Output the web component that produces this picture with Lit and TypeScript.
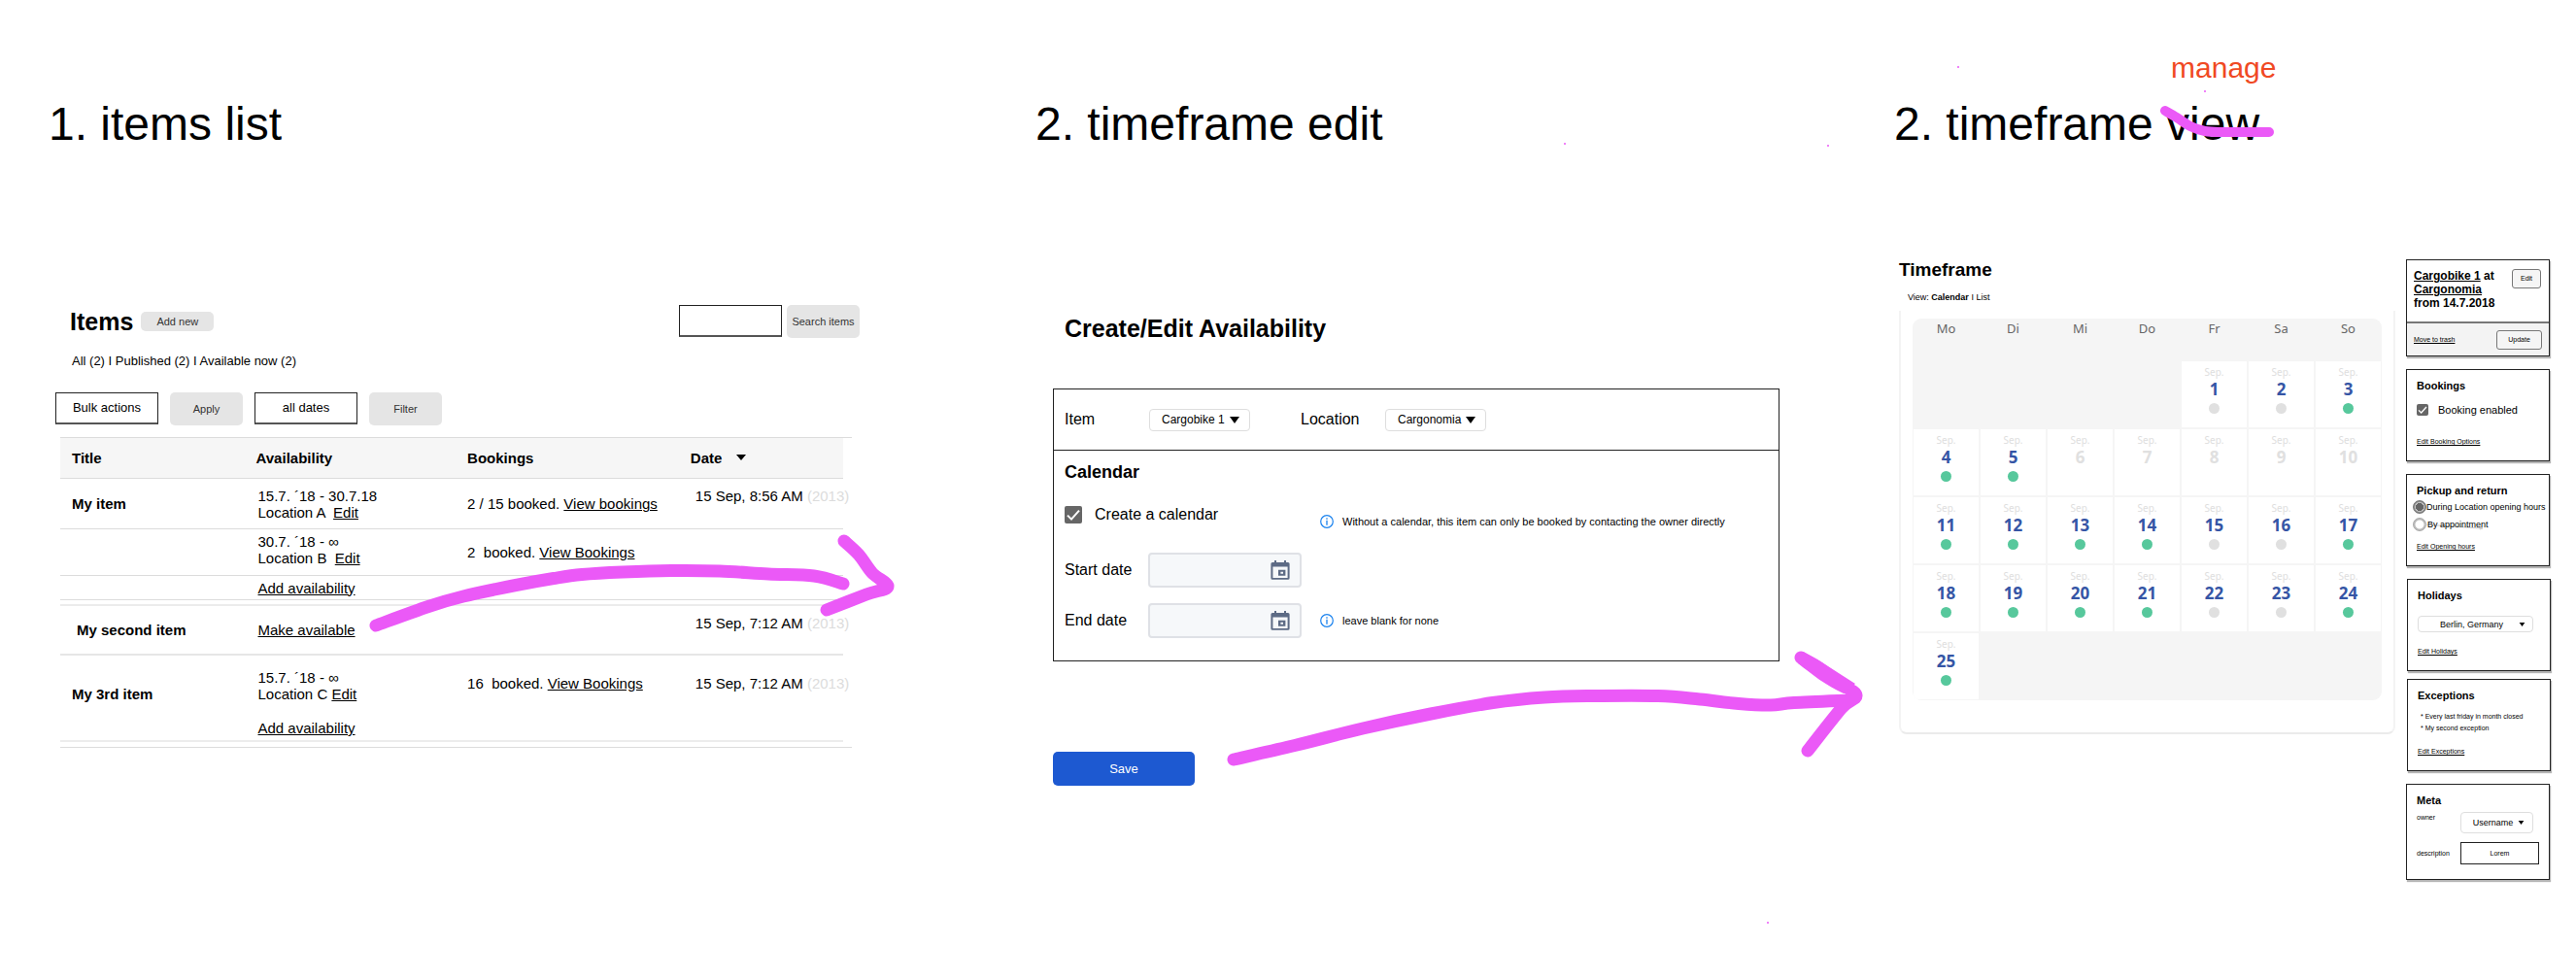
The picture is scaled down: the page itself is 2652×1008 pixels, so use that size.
import { LitElement, html, css, svg } from "lit";
import { customElement, property } from "lit/decorators.js";
import { classMap } from "lit/directives/class-map.js";

const base = css`
  *, *::before, *::after { box-sizing: border-box; }
  h1, h2, h3, p, ul { margin: 0; padding: 0; }
  button, input, select { font: inherit; color: inherit; margin: 0; padding: 0; }
  a { color: inherit; text-decoration: underline; }
  select, input { appearance: none; border-radius: 0; outline: none; }
  input[type="checkbox"] {
    width: 18px;
    height: 18px;
    flex: none;
    border-radius: 2px;
    background: #666 url("data:image/svg+xml,%3Csvg xmlns='http://www.w3.org/2000/svg' viewBox='0 0 18 18'%3E%3Cpath d='M3 9.6 7 13.6 15 4.6' fill='none' stroke='white' stroke-width='2'/%3E%3C/svg%3E") center / 100% 100% no-repeat;
  }
  .drop {
    border: 1px solid #dedede;
    border-radius: 4px;
    background: #fff url("data:image/svg+xml,%3Csvg xmlns='http://www.w3.org/2000/svg' viewBox='0 0 10 7'%3E%3Cpath d='M0 0h10L5 7z'/%3E%3C/svg%3E") right 10px center / 10px 7px no-repeat;
  }
`;

@customElement("items-list")
class ItemsList extends LitElement {
  static styles = [base, css`
    :host { display: block; font-size: 13px; line-height: 16px; }
    .top { display: flex; align-items: center; justify-content: space-between; padding-left: 15px; }
    .title { display: flex; align-items: center; gap: 8px; }
    h1 { font-size: 25px; line-height: 28px; }
    .grey { border: 0; border-radius: 5px; background: #e5e5e5; color: #333; font-size: 11px; width: 75px; height: 34px; white-space: nowrap; }
    .small { height: 20px; }
    .search { display: flex; gap: 5px; }
    .box { width: 106px; height: 33px; border: 1px solid #222; border-bottom: 2px solid #555; background: #fff; text-align-last: center; }
    .views { margin-top: 16px; padding-left: 17px; }
    .tools { display: flex; gap: 12px; margin-top: 24px; height: 34px; }
    .frame { margin: 12px 8px 0 5px; border-top: 1px solid #dcdcdc; border-bottom: 1px solid #dcdcdc; padding: 0 9px 5px 0; }
    table { width: 100%; table-layout: fixed; border-collapse: separate; border-spacing: 0; font-size: 15px; line-height: 17px; }
    th, td { padding: 0; text-align: left; white-space: nowrap; vertical-align: middle; border-bottom: 1px solid #dcdcdc; }
    thead th { background: #f6f6f6; height: 42px; }
    th:first-child { width: 25%; padding-left: 12px; }
    th:nth-child(2) { width: 27%; }
    th:nth-child(3) { width: 28.5%; }
    td:nth-child(2) { padding-left: 2px; }
    td:last-child { vertical-align: top; padding: 9px 0 0 5px; }
    .r52 td { height: 52px; }
    .r48 td { height: 48px; }
    .r48 td:nth-child(2) { padding-bottom: 6px; }
    .r25 td { height: 25px; }
    .gap td { height: 6px; padding: 0; border-bottom: 2px solid #ececec; }
    .r51 td, .r51 th { height: 51px; border-bottom: 2px solid #e6e6e6; }
    .r62 td { height: 62px; border-bottom: 0; }
    .r62 td:nth-child(3) { padding-bottom: 6px; }
    .r62 th { border-bottom: 0; padding-top: 16px; }
    .r62 td:last-child { padding-top: 20px; }
    .r27 td { height: 27px; border-bottom: 2px solid #ececec; }
    tbody .inset { padding-left: 17px; }
    .year { color: #dcdcdc; }
    .caret { margin-left: 10px; vertical-align: 3px; }
    .pre { white-space: pre; }
  `];

  private date(time: string) {
    return html`15 Sep, ${time} AM <span class="year">(2013)</span>`;
  }

  private period(range: string, place: string, space = "  ") {
    return html`${range}<br /><span class="pre">${place}${space}</span><a href="#edit">Edit</a>`;
  }

  render() {
    return html`
      <div class="top">
        <div class="title"><h1>Items</h1><button class="grey small">Add new</button></div>
        <div class="search">
          <input class="box" type="search" aria-label="Search items" />
          <button class="grey">Search items</button>
        </div>
      </div>
      <p class="views">All (2) I Published (2) I Available now (2)</p>
      <div class="tools">
        <select class="box" aria-label="Bulk actions"><option>Bulk actions</option></select>
        <button class="grey">Apply</button>
        <select class="box" aria-label="Dates"><option>all dates</option></select>
        <button class="grey">Filter</button>
      </div>
      <div class="frame">
        <table>
          <thead>
            <tr>
              <th>Title</th><th>Availability</th><th>Bookings</th>
              <th>Date <svg class="caret" width="10" height="6" viewBox="0 0 10 6"><path d="M0 0h10L5 6z" /></svg></th>
            </tr>
          </thead>
          <tbody>
            <tr class="r52">
              <th>My item</th>
              <td>${this.period("15.7. ´18 - 30.7.18", "Location A")}</td>
              <td>2 / 15 booked. <a href="#b1">View bookings</a></td>
              <td>${this.date("8:56")}</td>
            </tr>
            <tr class="r48">
              <td></td>
              <td>${this.period("30.7. ´18 - ∞", "Location B")}</td>
              <td><span class="pre">2  booked. </span><a href="#b2">View Bookings</a></td>
              <td></td>
            </tr>
            <tr class="r25"><td></td><td><a href="#add1">Add availability</a></td><td></td><td></td></tr>
            <tr class="gap"><td colspan="4"></td></tr>
            <tr class="r51">
              <th class="inset">My second item</th>
              <td><a href="#make">Make available</a></td>
              <td></td>
              <td>${this.date("7:12")}</td>
            </tr>
            <tr class="r62">
              <th>My 3rd item</th>
              <td>${this.period("15.7. ´18 - ∞", "Location C", " ")}</td>
              <td><span class="pre">16  booked. </span><a href="#b3">View Bookings</a></td>
              <td>${this.date("7:12")}</td>
            </tr>
            <tr class="r27"><td></td><td><a href="#add2">Add availability</a></td><td></td><td></td></tr>
          </tbody>
        </table>
      </div>
    `;
  }
}

@customElement("availability-form")
class AvailabilityForm extends LitElement {
  static styles = [base, css`
    :host { display: block; font-size: 16px; line-height: 20px; }
    h1 { font-size: 25px; line-height: 28px; padding-left: 12px; }
    .panel { margin-top: 48px; border: 1px solid #222; }
    .row { display: flex; align-items: center; height: 63px; padding: 0 11px; border-bottom: 1px solid #222; }
    .row label { width: 87px; }
    .row .drop { width: 104px; height: 23px; padding-left: 12px; font-size: 12px; line-height: 16px; }
    .row .drop + label { margin-left: 52px; }
    .calendar { padding: 11px 11px 23px; }
    h2 { font-size: 18px; line-height: 22px; }
    .fields { margin-top: 23px; display: grid; grid-template-columns: 86px 158px 1fr; grid-template-rows: 33px 36px 36px; row-gap: 16px; align-items: center; }
    .create { grid-column: 1 / 3; align-self: start; display: flex; gap: 13px; align-items: center; }
    .date { display: flex; align-items: center; height: 36px; padding-right: 10px; border: 2px solid #dfe1e6; border-radius: 4px; background: #f6f8fa; }
    .date input { flex: 1; min-width: 0; height: 100%; border: 0; background: none; }
    .hint { display: flex; align-items: center; gap: 9px; padding-left: 19px; font-size: 11px; line-height: 14px; }
    .hint svg { flex: none; }
    .start { grid-column: 1; }
    .save { margin-top: 93px; width: 146px; height: 35px; border: 0; border-radius: 5px; background: #1d59d1; color: #fff; font-size: 13px; }
  `];

  private hint(text: string) {
    return html`<p class="hint">
      <svg width="14" height="14" viewBox="0 0 14 14" fill="none" stroke="#1a82ee">
        <circle cx="7" cy="7" r="6.3" stroke-width="1.2" />
        <path d="M7 5.8v5M7 3.2v1.5" stroke-width="1.3" />
      </svg>${text}</p>`;
  }

  private dateBox(id: string) {
    return html`<div class="date">
      <input id=${id} type="text" />
      <svg width="20" height="20" viewBox="0 0 20 20" fill="#5d6b85">
        <path fill-rule="evenodd" d="M4 0h2v2h8V0h2v2h2a1.6 1.6 0 0 1 1.6 1.6v14.6A1.6 1.6 0 0 1 18 19.8H2A1.6 1.6 0 0 1 .4 18.2V3.6A1.6 1.6 0 0 1 2 2h2zM2.4 6.5V18h15.2V6.5z" />
        <path fill-rule="evenodd" d="M8 9.8h7.4v6H8zm2.4 2v2H13v-2z" />
      </svg>
    </div>`;
  }

  render() {
    return html`
      <h1>Create/Edit Availability</h1>
      <div class="panel">
        <div class="row">
          <label for="item">Item</label>
          <select id="item" class="drop"><option>Cargobike 1</option></select>
          <label for="location">Location</label>
          <select id="location" class="drop"><option>Cargonomia</option></select>
        </div>
        <div class="calendar">
          <h2>Calendar</h2>
          <div class="fields">
            <label class="create"><input type="checkbox" checked />Create a calendar</label>
            ${this.hint("Without a calendar, this item can only be booked by contacting the owner directly")}
            <label class="start" for="start">Start date</label>
            ${this.dateBox("start")}
            <label class="start" for="end">End date</label>
            ${this.dateBox("end")}
            ${this.hint("leave blank for none")}
          </div>
        </div>
      </div>
      <button class="save">Save</button>
    `;
  }
}

type Mark = "open" | "closed" | "past";
const closed = new Set([1, 2, 15, 16, 22, 23]);
const markOf = (day: number): Mark =>
  day >= 6 && day <= 10 ? "past" : closed.has(day) ? "closed" : "open";

@customElement("month-calendar")
class MonthCalendar extends LitElement {
  @property({ type: Number }) offset = 4;
  @property({ type: Number }) days = 25;

  static styles = [base, css`
    :host { display: block; padding: 8px 12px 33px; border: 2px solid #f3f3f3; border-top: 0; border-bottom-color: #ebebeb; border-radius: 0 0 8px 8px; font-family: "Noto Sans", "Open Sans", sans-serif; }
    table { width: 100%; table-layout: fixed; border-spacing: 0; background: #f5f5f5; border-radius: 9px; overflow: hidden; text-align: center; }
    th { height: 43px; padding: 1px 0 0; vertical-align: top; font-size: 13px; line-height: 18px; font-weight: 400; color: #666; }
    td { height: 70px; padding: 0; vertical-align: top; }
    .day { padding-top: 4px; border: 1px solid #f5f5f5; background: #fff; }
    .month { display: block; font-size: 10px; line-height: 14px; color: #dedede; }
    .num { display: block; font-size: 17px; line-height: 22px; font-weight: 700; color: #3555a5; }
    .past .num { color: #e0e0e0; }
    .dot { display: block; width: 11px; height: 11px; margin: 3px auto 0; border-radius: 50%; background: #57c89c; }
    .closed .dot { background: #e0e0e0; }
    .past .dot { display: none; }
  `];

  render() {
    const weeks = Math.ceil((this.offset + this.days) / 7);
    return html`<table>
      <thead><tr>${["Mo", "Di", "Mi", "Do", "Fr", "Sa", "So"].map((d) => html`<th>${d}</th>`)}</tr></thead>
      <tbody>
        ${Array.from({ length: weeks }, (_, w) => html`<tr>
          ${Array.from({ length: 7 }, (_, d) => {
            const day = w * 7 + d + 1 - this.offset;
            if (day < 1 || day > this.days) return html`<td></td>`;
            return html`<td class=${classMap({ day: true, [markOf(day)]: true })}>
              <span class="month">Sep.</span><span class="num">${day}</span><span class="dot"></span>
            </td>`;
          })}
        </tr>`)}
      </tbody>
    </table>`;
  }
}

@customElement("timeframe-side")
class TimeframeSide extends LitElement {
  static styles = [base, css`
    :host { display: flex; flex-direction: column; gap: 13px; font-size: 7px; line-height: 12px; }
    .card { height: 95px; padding: 9px 10px 0; border: 1px solid #222; background: #fff; box-shadow: 1px 2px 1px #b5b5b5; display: flex; flex-direction: column; align-items: flex-start; }
    .pair { display: flex; flex-direction: column; gap: 8px; margin: 0 -1px 0 1px; }
    h3 { font-size: 11px; line-height: 14px; }
    .card > a { margin: auto 0 13px; }
    .summary { height: 100px; padding: 0; align-items: stretch; }
    .head { height: 63px; padding: 9px 8px 0 7px; display: flex; justify-content: space-between; align-items: flex-start; }
    .head h3 { font-size: 12px; line-height: 14px; }
    .foot { flex: 1; display: flex; align-items: center; justify-content: space-between; padding: 0 7px; border-top: 2px solid #777; background: #f3f3f3; }
    .btn { height: 20px; width: 30px; border: 1px solid #777; border-radius: 3px; background: #f5f5f5; }
    .wide { width: 47px; }
    .check { display: flex; align-items: center; gap: 10px; font-size: 11px; margin-top: 12px; }
    .check input { width: 12px; height: 12px; }
    .radio { display: flex; align-items: center; margin: 2px 0 0 -4px; font-size: 9px; line-height: 16px; white-space: nowrap; }
    .radio input { flex: none; width: 14px; height: 14px; border: 1px solid #aaa; border-radius: 50%; background: radial-gradient(#fff 4px, #bbb 5px); }
    .radio input:checked { border-color: #777; background: radial-gradient(#666 4px, #ddd 4px, #777 6px); }
    .crossed { position: relative; z-index: 0; padding-left: 1px; }
    .crossed svg { position: absolute; left: -2px; top: 6px; z-index: -1; }
    .drop { font-size: 9px; background-size: 7px 4px; text-align-last: center; }
    .place { width: 119px; height: 17px; margin-top: 14px; padding-right: 8px; background-position: right 7px center; }
    ul { list-style: none; margin-top: 9px; padding-left: 3px; white-space: nowrap; }
    .meta { height: 99px; }
    .grid { display: grid; grid-template-columns: 45px 81px; row-gap: 9px; align-items: center; margin-top: 5px; }
    .user { width: 75px; height: 22px; padding-right: 8px; background-position: right 8px center; }
    .text { width: 100%; height: 23px; border: 1px solid #222; text-align: center; }
    .up { align-self: start; }
  `];

  render() {
    return html`
      <section class="card summary">
        <div class="head">
          <h3><a href="#bike">Cargobike 1</a> at<br /><a href="#loc">Cargonomia</a><br />from 14.7.2018</h3>
          <button class="btn">Edit</button>
        </div>
        <div class="foot"><a href="#trash">Move to trash</a><button class="btn wide">Update</button></div>
      </section>
      <section class="card">
        <h3>Bookings</h3>
        <label class="check"><input type="checkbox" checked />Booking enabled</label>
        <a href="#booking-options">Edit Booking Options</a>
      </section>
      <section class="card">
        <h3>Pickup and return</h3>
        <label class="radio"><input type="radio" name="pickup" checked />During Location opening hours</label>
        <label class="radio"><input type="radio" name="pickup" />
          <span class="crossed">By appointment
            <svg width="62" height="8" viewBox="0 0 62 8" stroke="#ccc" fill="#ccc"><path d="M0 2 57 6M57 4l3 2-3 1z" /></svg>
          </span>
        </label>
        <a href="#hours">Edit Opening hours</a>
      </section>
      <div class="pair">
        <section class="card">
          <h3>Holidays</h3>
          <select class="drop place" aria-label="Holiday region"><option>Berlin, Germany</option></select>
          <a href="#holidays">Edit Holidays</a>
        </section>
        <section class="card">
          <h3>Exceptions</h3>
          <ul><li>* Every last friday in month closed</li><li>* My second exception</li></ul>
          <a href="#exceptions">Edit Exceptions</a>
        </section>
      </div>
      <section class="card meta">
        <h3>Meta</h3>
        <div class="grid">
          <label class="up" for="owner">owner</label>
          <select id="owner" class="drop user"><option>Username</option></select>
          <label for="description">description</label>
          <input id="description" class="text" type="text" value="Lorem" />
        </div>
      </section>
    `;
  }
}

type Point = [number, number];

/** Smooth path through all the points of a pen stroke (Catmull-Rom). */
function stroke(points: Point[]): string {
  let d = `M${points[0].join(" ")}`;
  for (let i = 0; i < points.length - 1; i++) {
    const a = points[Math.max(i - 1, 0)];
    const b = points[i];
    const c = points[i + 1];
    const e = points[Math.min(i + 2, points.length - 1)];
    const c1 = [b[0] + (c[0] - a[0]) / 6, b[1] + (c[1] - a[1]) / 6];
    const c2 = [c[0] - (e[0] - b[0]) / 6, c[1] - (e[1] - b[1]) / 6];
    d += `C${c1.join(" ")} ${c2.join(" ")} ${c.join(" ")}`;
  }
  return d;
}

const arrows: Point[][] = [
  [[387, 644], [441, 624.5], [477, 614], [531, 602.5], [570, 595.5], [599, 591.5], [641, 589], [691, 587.5], [741, 588], [791, 591], [838, 593], [868, 601]],
  [[869, 557], [884, 571], [898, 590], [914, 604], [892, 612], [851, 628]],
  [[1270, 782], [1333, 767.5], [1403, 750], [1473, 735], [1537, 723.5], [1590, 718], [1637, 716.5], [1707, 716.500], [1750, 720], [1790, 724.500], [1823, 726], [1847, 723.500], [1904, 721]],
  [[1854, 677], [1873, 688], [1893, 703], [1911, 716], [1896, 729], [1861, 773]],
];

const strike: Point[] = [[2229, 114], [2241, 121], [2255, 130], [2270, 135], [2290, 136], [2336, 136]];

@customElement("app-root")
class AppRoot extends LitElement {
  static styles = [base, css`
    :host { display: block; position: relative; overflow: hidden; min-height: 100vh; background: #fff; color: #000; font-family: "Liberation Sans", Arial, Helvetica, sans-serif; }
    .board { display: grid; grid-template-columns: 1016fr 884fr 702fr; padding: 100px 0 0 50px; }
    .step { font-size: 48px; line-height: 56px; font-weight: 400; white-space: nowrap; }
    .word { position: relative; }
    .note { position: absolute; left: 5px; bottom: 67px; font-size: 30px; line-height: 34px; color: #f04923; }
    .list { margin: 158px 181px 0 7px; }
    .form { margin: 168px 118px 0 18px; }
    .manage { margin: 111px 27px 0 5px; display: grid; grid-template-columns: 1fr 148px; gap: 11px; align-items: start; }
    h1 { font-size: 19px; line-height: 22px; }
    .view { margin: 11px 0 8px 9px; font-size: 9px; line-height: 12px; }
    .ink { position: absolute; top: 0; left: 0; width: 100%; pointer-events: none; }
  `];

  private ink() {
    const specks: Point[] = [[1611, 148], [1882, 150], [2016, 69], [2270, 94], [1820, 950]];
    return html`<svg class="ink" viewBox="0 0 2652 1008" fill="none" stroke="#eb59f7" stroke-linecap="round" stroke-linejoin="round" aria-hidden="true">
      <g stroke-width="13">${arrows.map((points) => svg`<path d=${stroke(points)} />`)}</g>
      <path fill="#eb59f7" stroke="none" d="M1851 683C1865 694 1880 706 1898 714L1910 704L1871 679L1856 671Z" />
      <path stroke-width="10" d=${stroke(strike)} />
      ${specks.map(([x, y]) => svg`<circle cx=${x} cy=${y} r="1" fill="#eb59f7" stroke="none" />`)}
    </svg>`;
  }

  render() {
    return html`
      <main class="board">
        <section>
          <h2 class="step">1. items list</h2>
          <items-list class="list"></items-list>
        </section>
        <section>
          <h2 class="step">2. timeframe edit</h2>
          <availability-form class="form"></availability-form>
        </section>
        <section>
          <h2 class="step">2. timeframe <span class="word">view<span class="note">manage</span></span></h2>
          <div class="manage">
            <div>
              <h1>Timeframe</h1>
              <p class="view">View: <b>Calendar</b> I List</p>
              <month-calendar></month-calendar>
            </div>
            <timeframe-side></timeframe-side>
          </div>
        </section>
      </main>
      ${this.ink()}
    `;
  }
}
